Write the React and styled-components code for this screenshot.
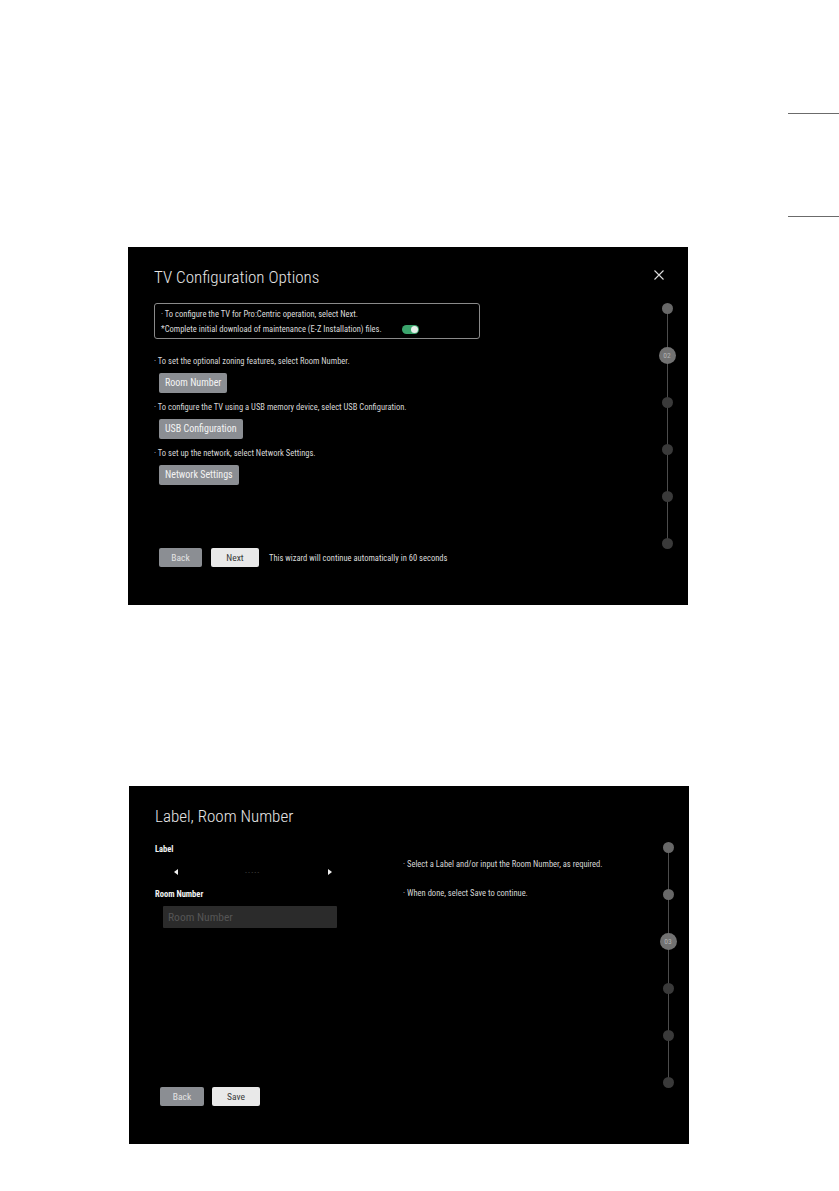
import React from "react";
import styled, { createGlobalStyle } from "styled-components";

const SANS = `"Liberation Sans Narrow", "Roboto Condensed", "Liberation Sans", Arial, sans-serif`;

const GlobalStyle = createGlobalStyle`
  html, body {
    margin: 0;
    padding: 0;
    background: #fff;
  }
  * {
    box-sizing: border-box;
  }
`;

const Page = styled.div`
  width: 839px;
  min-height: 1191px;
  display: flex;
  flex-direction: column;
  font-family: ${SANS};
`;

const SectionTab = styled.div`
  align-self: flex-end;
  width: 51px;
  height: 104px;
  margin-top: 113px;
  border-top: 1px solid #6b6b6b;
  border-bottom: 1px solid #6b6b6b;
`;

const Panel = styled.section`
  display: flex;
  width: 560px;
  height: 358px;
  margin-top: ${(p) => p.$top}px;
  margin-left: ${(p) => p.$left}px;
  background: #000;
`;

const Main = styled.div`
  flex: 1;
  min-width: 0;
  display: flex;
  flex-direction: column;
  padding: 18px 0 38px 26px;
`;

const Title = styled.h1`
  margin: 0;
  font: 300 17px/24px ${SANS};
  color: #e6e6e6;
`;

const Side = styled.div`
  width: 36px;
  margin-right: 3px;
  padding-top: 23px;
  display: flex;
  flex-direction: column;
  align-items: center;
`;

const CloseSlot = styled.div`
  align-self: flex-start;
  margin-left: 5px;
  width: 10px;
  height: 15px;

  svg {
    display: block;
  }
`;

const Rail = styled.div`
  position: relative;
  display: flex;
  flex-direction: column;
  align-items: center;
  width: 100%;

  &::before {
    content: "";
    position: absolute;
    left: 50%;
    top: 23.5px;
    bottom: 23.5px;
    width: 1px;
    background: #4c4c4c;
  }
`;

const StepSlot = styled.div`
  position: relative;
  height: 47px;
  display: flex;
  align-items: center;
  justify-content: center;
`;

const Dot = styled.div`
  width: ${(p) => (p.$state === "current" ? 17 : 11)}px;
  height: ${(p) => (p.$state === "current" ? 17 : 11)}px;
  border-radius: 50%;
  background: ${(p) =>
    p.$state === "todo" ? "#3a3a3a" : p.$state === "current" ? "#727272" : "#686868"};
  color: #b4b4b4;
  font: 400 7.5px/1 ${SANS};
  display: flex;
  align-items: center;
  justify-content: center;
`;

const InfoBox = styled.div`
  margin-top: 14px;
  width: 326px;
  height: 36px;
  border: 1px solid #8a8a8a;
  border-radius: 3px;
  padding: 3px 6px;
`;

const InfoLine = styled.div`
  display: flex;
  align-items: center;
  height: 15px;
  font: 400 8.5px/15px ${SANS};
  color: #dcdcdc;
  white-space: nowrap;
`;

const Toggle = styled.span`
  position: relative;
  margin-left: 20px;
  width: 17px;
  height: 9px;
  border-radius: 5px;
  background: #3ba46c;

  &::after {
    content: "";
    position: absolute;
    right: 1px;
    top: 1px;
    width: 7px;
    height: 7px;
    border-radius: 50%;
    background: #e6eee9;
  }
`;

const Option = styled.div`
  display: flex;
  flex-direction: column;
  align-items: flex-start;
  margin-top: ${(p) => p.$gap}px;
`;

const Hint = styled.div`
  font: 400 8.5px/12px ${SANS};
  color: #d6d6d6;
  white-space: nowrap;
`;

const ActionButton = styled.button`
  margin: 6px 0 0 5px;
  height: 20px;
  padding: 0 6px;
  border: 0;
  border-radius: 2px;
  background: #8b8e93;
  color: #f4f4f4;
  font: 400 10px/20px ${SANS};
`;

const Footer = styled.div`
  margin-top: auto;
  display: flex;
  align-items: center;
  gap: ${(p) => p.$gap}px;
  padding-left: 5px;
`;

const FooterButton = styled.button`
  width: ${(p) => p.$w}px;
  height: 19px;
  padding: 0;
  border: 0;
  border-radius: 2px;
  background: ${(p) => (p.$light ? "#e9e9e9" : "#8b8e93")};
  color: ${(p) => (p.$light ? "#3a3a3a" : "#e4e4e4")};
  font: 400 9.5px/19px ${SANS};
`;

const FooterNote = styled.span`
  margin-left: 1px;
  font: 400 8.5px/12px ${SANS};
  color: #dcdcdc;
`;

const Columns = styled.div`
  display: flex;
`;

const FormCol = styled.div`
  width: 248px;
  display: flex;
  flex-direction: column;
  align-items: flex-start;
`;

const FieldLabel = styled.div`
  margin-top: ${(p) => p.$gap}px;
  font: 700 8.5px/12px ${SANS};
  color: #f2f2f2;
`;

const Selector = styled.div`
  margin: 8px 0 0 19px;
  width: 158px;
  height: 18px;
  display: flex;
  align-items: center;
  justify-content: space-between;
`;

const Arrow = styled.span`
  width: 0;
  height: 0;
  border-top: 3.5px solid transparent;
  border-bottom: 3.5px solid transparent;
  ${(p) =>
    p.$dir === "left"
      ? "border-right: 4px solid #f0f0f0;"
      : "border-left: 4px solid #f0f0f0;"}
`;

const Dashes = styled.span`
  font: 400 6px/1 ${SANS};
  color: #777;
  letter-spacing: 1.6px;
`;

const RoomInput = styled.input`
  margin: 6px 0 0 8px;
  width: 174px;
  height: 22px;
  padding: 0 5px;
  border: 0;
  border-radius: 1px;
  background: #2b2b2b;
  color: #ddd;
  font: 400 11.5px/22px ${SANS};
  outline: 0;

  &::placeholder {
    color: #555;
  }
`;

const InfoCol = styled.div`
  display: flex;
  flex-direction: column;
  padding-top: 30px;
  gap: 17px;
`;

const CloseIcon = () => (
  <svg width="10" height="10" viewBox="0 0 10 10">
    <path d="M0.5 0.5 L9.5 9.5 M9.5 0.5 L0.5 9.5" stroke="#dedede" strokeWidth="1.1" fill="none" />
  </svg>
);

const StepRail = ({ current, label }) => (
  <Rail>
    {[0, 1, 2, 3, 4, 5].map((i) => {
      const state = i < current ? "done" : i === current ? "current" : "todo";
      return (
        <StepSlot key={i}>
          <Dot $state={state}>{state === "current" ? label : null}</Dot>
        </StepSlot>
      );
    })}
  </Rail>
);

const ConfigPanel = () => (
  <Panel $top={30} $left={128}>
    <Main>
      <Title>TV Configuration Options</Title>
      <InfoBox>
        <InfoLine>· To configure the TV for Pro:Centric operation, select Next.</InfoLine>
        <InfoLine>
          *Complete initial download of maintenance (E-Z Installation) files.
          <Toggle />
        </InfoLine>
      </InfoBox>
      <Option $gap={16}>
        <Hint>· To set the optional zoning features, select Room Number.</Hint>
        <ActionButton>Room Number</ActionButton>
      </Option>
      <Option $gap={8}>
        <Hint>· To configure the TV using a USB memory device, select USB Configuration.</Hint>
        <ActionButton>USB Configuration</ActionButton>
      </Option>
      <Option $gap={8}>
        <Hint>· To set up the network, select Network Settings.</Hint>
        <ActionButton>Network Settings</ActionButton>
      </Option>
      <Footer $gap={9}>
        <FooterButton $w={43}>Back</FooterButton>
        <FooterButton $w={48} $light>Next</FooterButton>
        <FooterNote>This wizard will continue automatically in 60 seconds</FooterNote>
      </Footer>
    </Main>
    <Side>
      <CloseSlot>
        <CloseIcon />
      </CloseSlot>
      <StepRail current={1} label="02" />
    </Side>
  </Panel>
);

const RoomPanel = () => (
  <Panel $top={181} $left={129}>
    <Main>
      <Title>Label, Room Number</Title>
      <Columns>
        <FormCol>
          <FieldLabel $gap={15}>Label</FieldLabel>
          <Selector>
            <Arrow $dir="left" />
            <Dashes>-----</Dashes>
            <Arrow $dir="right" />
          </Selector>
          <FieldLabel $gap={7}>Room Number</FieldLabel>
          <RoomInput placeholder="Room Number" />
        </FormCol>
        <InfoCol>
          <Hint>· Select a Label and/or input the Room Number, as required.</Hint>
          <Hint>· When done, select Save to continue.</Hint>
        </InfoCol>
      </Columns>
      <Footer $gap={8}>
        <FooterButton $w={44}>Back</FooterButton>
        <FooterButton $w={48} $light>Save</FooterButton>
      </Footer>
    </Main>
    <Side>
      <CloseSlot />
      <StepRail current={2} label="03" />
    </Side>
  </Panel>
);

export default function App() {
  return (
    <>
      <GlobalStyle />
      <Page>
        <SectionTab />
        <ConfigPanel />
        <RoomPanel />
      </Page>
    </>
  );
}
